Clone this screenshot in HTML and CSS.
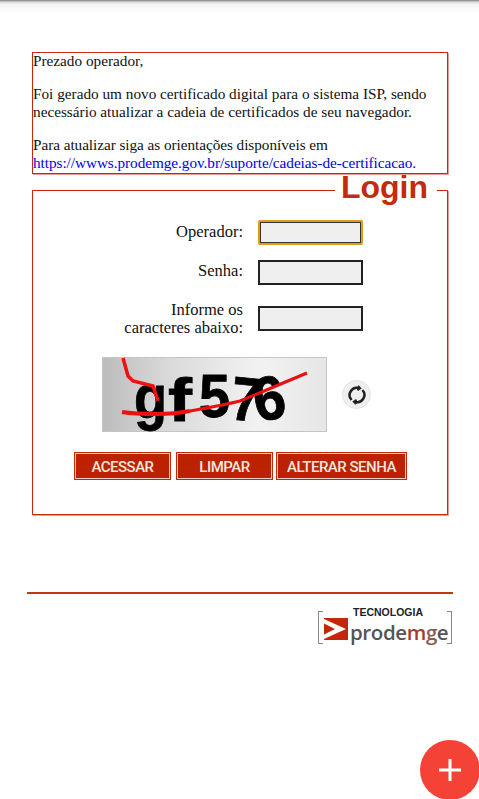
FILE: index.html
```html
<!DOCTYPE html>
<html lang="pt-BR">
<head>
  <meta charset="UTF-8">
  <title>Login</title>
  <meta name="viewport" content="width=device-width,initial-scale=1">
  <link rel="stylesheet" href="styles.css">
</head>
<body>
  <div class="topshade"></div>
  <div class="container">
    <div class="notice">
      <p>Prezado operador,</p>
      <p>Foi gerado um novo certificado digital para o sistema ISP, sendo necessário atualizar a cadeia de certificados de seu navegador.</p>
      <p class="tight">Para atualizar siga as orientações disponíveis em <a href="#">https://wwws.prodemge.gov.br/suporte/cadeias-de-certificacao.</a></p>
    </div>
    <fieldset class="login">
      <legend>Login</legend>
      <form class="login-form">
        <label class="row-oper" for="operador">Operador:</label>
        <input class="row-oper focused" type="text" id="operador">
        <label class="row-senha" for="senha">Senha:</label>
        <input class="row-senha" type="password" id="senha">
        <label class="row-cap" for="captcha">Informe os<br>caracteres abaixo:</label>
        <input class="row-cap" type="text" id="captcha">
      </form>
      <div class="captcha-row">
        <div class="captcha-img">
          <svg width="225" height="75" viewBox="0 0 225 75" overflow="visible">
            <defs>
              <linearGradient id="capbg" x1="0" x2="1" y1="0" y2="0">
                <stop offset="0" stop-color="#bcbcbc"/>
                <stop offset="0.3" stop-color="#dadada"/>
                <stop offset="0.7" stop-color="#f2f2f2"/>
                <stop offset="1" stop-color="#e6e6e6"/>
              </linearGradient>
              <filter id="capblur"><feGaussianBlur stdDeviation="0.6"/></filter>
            </defs>
            <rect x="0.5" y="0.5" width="224" height="74" fill="url(#capbg)" stroke="#c4c4c4"/>
            <g filter="url(#capblur)" fill="#050505" stroke="#050505" stroke-width="0.8" font-family="'Liberation Sans', sans-serif" font-weight="700" font-size="62">
              <text x="32" y="61" textLength="33" lengthAdjust="spacingAndGlyphs">g</text>
              <text x="66" y="64" textLength="24" lengthAdjust="spacingAndGlyphs">f</text>
              <text x="97" y="60" textLength="31" lengthAdjust="spacingAndGlyphs">5</text>
              <text x="127" y="62" textLength="30" lengthAdjust="spacingAndGlyphs" transform="rotate(6 127 62)">7</text>
              <text x="155" y="65" textLength="32" lengthAdjust="spacingAndGlyphs" transform="rotate(-10 155 65)">6</text>
            </g>
            <path d="M21 1 L26 19 L31 24 L51 29 L56 44" fill="none" stroke="#f01010" stroke-width="3.5"/>
            <path d="M20 55 C32 57 44 57 55 57 C68 57 78 56 88 54" fill="none" stroke="#ee1010" stroke-width="4"/>
            <path d="M88 54 C105 51 122 48 138 44 C153 38 167 32 181 26 L205 16" fill="none" stroke="#e81010" stroke-width="3"/>
          </svg>
        </div>
        <button type="button" class="refresh" aria-label="Atualizar">
          <svg width="20" height="20" viewBox="0 0 20 20" fill="none" stroke="#222" stroke-width="2.5">
            <path d="M12 3.2 A7.2 7.2 0 0 0 4.6 15"/>
            <path d="M8 16.8 A7.2 7.2 0 0 0 15.4 5"/>
            <path d="M11 0.8 L13.2 3.4 L10.4 5.2" stroke-width="2"/>
            <path d="M9 19.2 L6.8 16.6 L9.6 14.8" stroke-width="2"/>
          </svg>
        </button>
      </div>
      <div class="actions">
        <button type="button" class="btn btn-a">ACESSAR</button>
        <button type="button" class="btn btn-b">LIMPAR</button>
        <button type="button" class="btn btn-c">ALTERAR SENHA</button>
      </div>
    </fieldset>
    <div class="footer">
      <div class="logo">
        <span class="logo-top">TECNOLOGIA</span>
        <div class="logo-main">
          <svg width="24" height="22" viewBox="0 0 24 22">
            <rect width="24" height="22" fill="#c4260c"/>
            <path d="M0 1 L22 11 L0 21 L0 16.5 L11 11 L0 5.5 Z" fill="#fff"/>
          </svg>
          <span class="logo-name">prode<b>m</b><i>g</i>e</span>
        </div>
      </div>
    </div>
  </div>
  <button type="button" class="fab" aria-label="Adicionar">
    <svg width="22" height="22" viewBox="0 0 22 22"><path d="M11 0 V22 M0 11 H22" stroke="#fff" stroke-width="3"/></svg>
  </button>
</body>
</html>
```
FILE: styles.css
```css
html, body { height: 100%; }
body { font-family: 'Liberation Serif', serif; font-size: 15.25px; line-height: 18px; color: #111; background: #fff; margin: 0; overflow: hidden; }
.topshade { position: absolute; top: 0; left: 0; right: 0; height: 14px; background: linear-gradient(#7d7d7d 0, #d8d8d8 2px, #f4f4f4 4px, #fff 14px); }
.container { padding: 52px 31px 0 32px; }
.notice { border: 1px solid #c8280a; box-shadow: 1px 1px 0 rgba(200,40,10,0.45); height: 122px; box-sizing: border-box; }
.notice p { margin: 0 0 15px; position: relative; top: -1px; }
.notice p.tight { letter-spacing: -0.05px; }
.notice a { color: #0000ee; text-decoration: none; }

.login { margin: -3px 0 0; padding: 0; border: 1px solid #c8280a; box-shadow: 1px 1px 0 rgba(200,40,10,0.45); height: 344px; box-sizing: border-box; }
.login legend { margin-left: auto; margin-right: 10px; padding: 0 9px 6px 6px; font-family: 'Liberation Sans', sans-serif; font-weight: 700; font-size: 32px; line-height: 32px; color: #c42a0c; }

.login-form { display: grid; grid-template-columns: 210px 105px; column-gap: 15px; row-gap: 15px; margin-top: 11px; align-items: center; }
.login-form label { text-align: right; font-size: 16.5px; }
.login-form label.row-oper { padding-bottom: 2px; }
.login-form label.row-senha { padding-bottom: 4px; }
.login-form input { width: 105px; height: 25px; box-sizing: border-box; border: 2px solid #222; background: #efefef; padding: 0; margin: 0; border-radius: 0; }
.login-form input.focused { border-color: #e39a14; box-shadow: inset 0 0 0 1px #333; border-radius: 2px; }
.login-form label.row-cap { align-self: start; padding-top: 1px; }
.login-form input.row-cap { align-self: start; margin-top: 6px; }

.captcha-row { display: flex; align-items: center; gap: 15px; margin: 20px 0 0 69px; }
.captcha-img { width: 225px; height: 75px; }
.captcha-img svg { display: block; }
.refresh { width: 29px; height: 29px; border-radius: 50%; border: 1px solid #e4e4e4; background: #efefef; padding: 0; display: flex; align-items: center; justify-content: center; }

.actions { display: flex; margin: 20px 0 0 41px; }
.btn { height: 28px; box-sizing: border-box; background: #bc2200; color: #f6e4df; border: 1px solid #c8280a; box-shadow: inset 0 0 0 1px #f2cdc2; font-family: 'Roboto', sans-serif; font-size: 15px; font-weight: 500; padding: 1px 0 0; letter-spacing: -0.5px; }
.btn-a { width: 97px; margin-right: 5px; }
.btn-b { width: 97px; margin-right: 3px; }
.btn-c { width: 131px; }

.footer { margin: 77px -5px 0 -5px; border-top: 2px solid #c0381c; display: flex; justify-content: flex-end; padding-top: 12px; }
.logo { width: 134px; height: 39px; box-sizing: border-box; margin-right: 1px; padding-left: 6px; position: relative; display: flex; flex-direction: column; }
.logo::before, .logo::after { content: ""; position: absolute; top: 5px; bottom: 1px; width: 4px; border: 1px solid #888; }
.logo::before { left: 0; border-right: none; }
.logo::after { right: 0; border-left: none; }
.logo-top { font-family: 'Liberation Sans', sans-serif; font-weight: 700; font-size: 10.5px; line-height: 12px; color: #222; margin-left: 29px; }
.logo-main { display: flex; align-items: flex-start; gap: 2px; height: 22px; }
.logo-main svg { flex: none; }
.logo-name { font-family: 'Open Sans', sans-serif; font-weight: 600; font-size: 20.5px; line-height: 22px; margin-top: 3px; color: #555; letter-spacing: -0.4px; }
.logo-name b { font-weight: 600; color: #a83a2c; }
.logo-name i { font-style: normal; color: #8c5a52; }

.fab { position: fixed; right: -1px; bottom: -1px; width: 60px; height: 60px; border-radius: 50%; border: none; padding: 0; background: #f44336; display: flex; align-items: center; justify-content: center; }
```
